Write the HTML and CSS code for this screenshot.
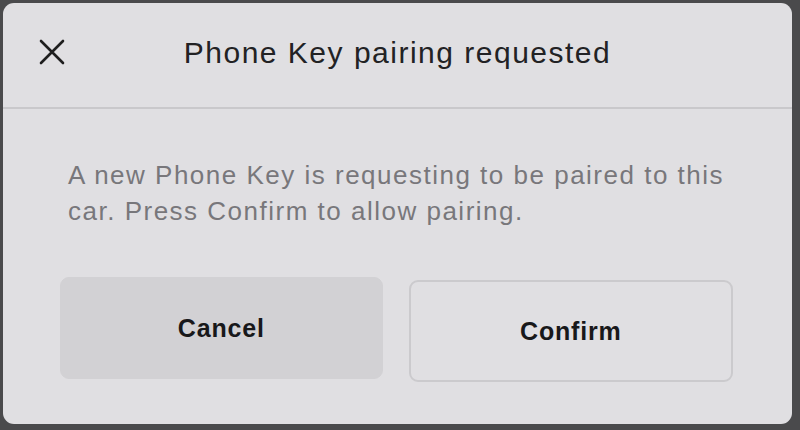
FILE: index.html
```html
<!DOCTYPE html>
<html lang="en">
<head>
    <meta charset="UTF-8">
    <meta name="viewport" content="width=device-width, initial-scale=1.0">
    <title>Phone Key</title>
    <link rel="stylesheet" href="styles.css">
</head>
<body>
    <div class="dialog">
        <div class="dialog-header">
            <button class="close-btn" aria-label="Close">
                <svg width="26" height="26" viewBox="0 0 26 26">
                    <path d="M2 2 L24 24 M24 2 L2 24" stroke="#1e1e1e" stroke-width="2.6" stroke-linecap="round" fill="none"/>
                </svg>
            </button>
            <h1 class="dialog-title">Phone Key pairing requested</h1>
        </div>
        <div class="dialog-body">
            <p class="message">A new Phone Key is requesting to be paired to this car. Press Confirm to allow pairing.</p>
            <div class="actions">
                <button class="btn btn-cancel">Cancel</button>
                <button class="btn btn-confirm">Confirm</button>
            </div>
        </div>
    </div>
</body>
</html>
```

FILE: styles.css
```css
body {
    margin: 0;
    background-color: #4a4a4c;
    font-family: "Liberation Sans", Arial, sans-serif;
    width: 800px;
    height: 430px;
    overflow: hidden;
}

.dialog {
    margin: 3px 0 0 3px;
    width: 789px;
    height: 421px;
    background-color: #e0dfe2;
    border-radius: 11px;
    display: flex;
    flex-direction: column;
}

.dialog-header {
    position: relative;
    height: 104px;
    border-bottom: 2px solid #c9c8cb;
    display: flex;
    align-items: center;
    justify-content: center;
}

.close-btn {
    position: absolute;
    left: 36px;
    top: 36px;
    padding: 0;
    border: none;
    background: none;
    display: flex;
}

.dialog-title {
    margin: 0 0 4px 0;
    font-size: 30px;
    font-weight: normal;
    letter-spacing: 1.5px;
    color: #222224;
}

.dialog-body {
    padding: 48px 59px 0 57px;
}

.message {
    margin: 0 0 0 8px;
    max-width: 680px;
    font-size: 26px;
    line-height: 36px;
    letter-spacing: 1.5px;
    color: #78777b;
}

.actions {
    margin-top: 48px;
    display: flex;
    gap: 26px;
}

.btn {
    flex: 1;
    height: 102px;
    border-radius: 9px;
    font-family: "Liberation Sans", Arial, sans-serif;
    font-size: 25px;
    font-weight: bold;
    color: #18181a;
    letter-spacing: 0.8px;
}

.btn-cancel {
    background-color: #d2d1d4;
    border: 1px solid #d2d1d4;
}

.btn-confirm {
    margin-top: 3px;
    background-color: transparent;
    border: 2px solid #cbcacd;
}
```
